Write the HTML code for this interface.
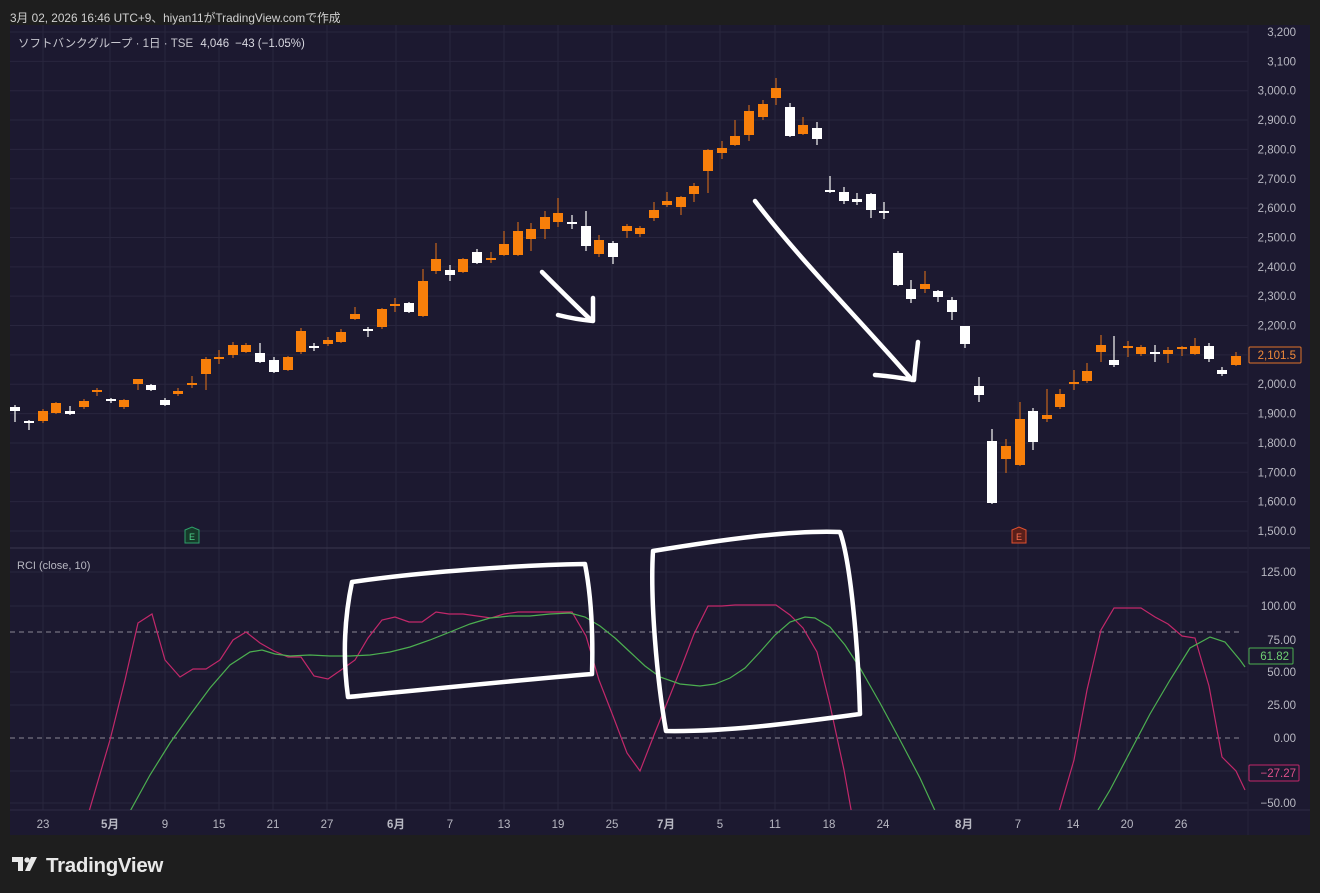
<!DOCTYPE html>
<html><head><meta charset="utf-8"><style>
html,body{margin:0;padding:0;background:#1e1e1e;width:1320px;height:893px;overflow:hidden;font-family:"Liberation Sans","Noto Sans CJK JP",sans-serif}
.top{position:absolute;left:10px;top:9px;font-size:11.8px;color:#d0d0d0}
svg{position:absolute;left:0;top:0}
</style></head><body>
<div class="top">3月 02, 2026 16:46 UTC+9、hiyan11がTradingView.comで作成</div>
<svg id="s" width="1320" height="893" xmlns="http://www.w3.org/2000/svg" font-family="Liberation Sans, Noto Sans CJK JP, sans-serif">
<rect x="10" y="25" width="1300" height="810" fill="#1c1930"/>
<g id="grid" stroke="#29263e" stroke-width="1"></g>
<line x1="10" y1="548" x2="1310" y2="548" stroke="#3a374e"/>
<line x1="10" y1="810" x2="1310" y2="810" stroke="#2e2b44"/>
<line x1="1248" y1="25" x2="1248" y2="835" stroke="#26233a"/>
<line x1="10" y1="632" x2="1240" y2="632" stroke="#8a8894" stroke-dasharray="5,4"/>
<line x1="10" y1="738" x2="1240" y2="738" stroke="#8a8894" stroke-dasharray="5,4"/>
<g id="candles"></g>
<clipPath id="rc"><rect x="10" y="550" width="1238" height="260"/></clipPath>
<g clip-path="url(#rc)" fill="none" stroke-width="1.2">
<polyline stroke="#c2286a" points="88,815 110,740 125,680 138,623 152,614 165,660 180,677 193,669 206,669 220,660 233,640 246,632 260,643 274,651 288,657 301,657 314,676 328,679 341,670 355,660 368,638 382,620 395,617 409,622 422,622 436,612 449,614 463,614 477,616 491,618 504,614 518,612 531,612 545,612 558,612 572,612 586,636 599,680 613,716 627,753 640,771 654,735 667,703 681,668 694,634 708,606 722,606 735,605 749,605 763,605 776,605 790,615 803,628 817,652 830,705 844,770 852,815"/>
<polyline stroke="#c2286a" points="1058,815 1074,760 1087,690 1101,630 1114,608 1128,608 1141,608 1155,617 1168,624 1182,636 1195,638 1209,686 1222,757 1236,771 1245,790"/>
<polyline stroke="#4caf50" points="128,815 150,775 170,743 190,715 210,688 230,665 250,652 262,650 275,654 290,656 310,655 330,656 350,656 370,655 390,652 410,647 430,640 450,632 470,624 490,618 510,616 530,616 550,614 570,613 585,617 600,626 615,638 630,652 645,666 660,677 680,684 700,686 715,684 730,678 745,668 760,652 775,635 790,622 805,617 815,618 830,627 845,645 860,668 880,703 900,740 920,778 937,815"/>
<polyline stroke="#4caf50" points="1095,815 1110,790 1130,752 1150,714 1170,680 1190,648 1210,637 1225,642 1240,660 1245,667"/>
</g>
<g fill="none" stroke="#fff" stroke-width="4.5" stroke-linecap="round" stroke-linejoin="round">
<path d="M542,272 C560,290 575,305 591,320 M558,315 C570,318 582,320 593,321 L593,298"/>
<path d="M755,201 C800,260 860,320 912,380 M875,375 C890,376 902,378 914,380 C915,365 917,352 918,342"/>
<path d="M352,582 C420,572 520,565 585,564 C592,600 593,640 592,674 C520,680 420,690 348,697 C343,660 344,620 352,582 Z"/>
<path d="M653,551 C720,540 790,530 840,532 C850,560 858,640 860,714 C800,722 730,732 666,731 C657,680 650,600 653,551 Z"/>
</g>
<g font-size="11.5" fill="#b8b8c2" text-anchor="end" id="py"></g>
<g font-size="11.5" fill="#b8b8c2" text-anchor="end">
<text x="1296" y="576">125.00</text><text x="1296" y="610">100.00</text><text x="1296" y="644">75.00</text><text x="1296" y="676">50.00</text><text x="1296" y="709">25.00</text><text x="1296" y="742">0.00</text><text x="1296" y="807">−50.00</text>
</g>
<rect x="1249" y="347" width="52" height="16" fill="#1c1930" stroke="#e0742a" rx="1"/>
<text x="1296" y="359" font-size="11.5" fill="#f08a3a" text-anchor="end">2,101.5</text>
<rect x="1249" y="648" width="44" height="16" fill="#1c1930" stroke="#4caf50" rx="1"/>
<text x="1289" y="660" font-size="11.5" fill="#6fcf73" text-anchor="end">61.82</text>
<rect x="1249" y="765" width="50" height="16" fill="#1c1930" stroke="#c2286a" rx="1"/>
<text x="1296" y="777" font-size="11.5" fill="#e0508a" text-anchor="end">−27.27</text>
<g font-size="11.5" fill="#b8b8c2" text-anchor="middle" id="tx">
<text x="43" y="828">23</text><text x="110" y="828" font-weight="bold">5月</text><text x="165" y="828">9</text><text x="219" y="828">15</text><text x="273" y="828">21</text><text x="327" y="828">27</text><text x="396" y="828" font-weight="bold">6月</text><text x="450" y="828">7</text><text x="504" y="828">13</text><text x="558" y="828">19</text><text x="612" y="828">25</text><text x="666" y="828" font-weight="bold">7月</text><text x="720" y="828">5</text><text x="775" y="828">11</text><text x="829" y="828">18</text><text x="883" y="828">24</text><text x="964" y="828" font-weight="bold">8月</text><text x="1018" y="828">7</text><text x="1073" y="828">14</text><text x="1127" y="828">20</text><text x="1181" y="828">26</text>
</g>
<text x="18" y="47" font-size="11.5" fill="#c8c8d0">ソフトバンクグループ · 1日 · TSE <tspan dx="4" fill="#d8d8e0">4,046</tspan><tspan dx="6" fill="#d8d8e0">−43 (−1.05%)</tspan></text>
<text x="17" y="569" font-size="11" fill="#b8b8c2">RCI (close, 10)</text>
<path d="M185,530 L192,527 L199,530 L199,543 L185,543 Z" fill="#163a2a" stroke="#2ea06a"/>
<text x="192" y="540" font-size="9" fill="#4fd08a" text-anchor="middle">E</text>
<path d="M1012,530 L1019,527 L1026,530 L1026,543 L1012,543 Z" fill="#5a1f1a" stroke="#e05030"/>
<text x="1019" y="540" font-size="9" fill="#ff7050" text-anchor="middle">E</text>
<g fill="#e8e8e8">
<path d="M12,857 h11 v14 h-5 v-9 h-6 z"/><circle cx="27" cy="860" r="2.6"/><path d="M31,857 h6 l-7,14 h-5 z"/>
</g>
<text x="46" y="872" font-size="20.5" font-weight="bold" fill="#e8e8e8" letter-spacing="-0.3">TradingView</text>
</svg>
<script>
var NS="http://www.w3.org/2000/svg";
function el(p,t,a){var e=document.createElementNS(NS,t);for(var k in a)e.setAttribute(k,a[k]);p.appendChild(e);return e;}
var g=document.getElementById('grid');
[43,110,165,219,273,327,396,450,504,558,612,666,720,775,829,883,964,1018,1073,1127,1181].forEach(function(x){el(g,'line',{x1:x,y1:25,x2:x,y2:810});});
var py=document.getElementById('py');
for(var i=0;i<18;i++){var v=3200-i*100;var y=32+i*(499/17);
el(g,'line',{x1:10,y1:y,x2:1248,y2:y});
var t=el(py,'text',{x:1296,y:y+4});t.textContent=v.toLocaleString('en-US')+'.0';
if(i==0||i==1)t.textContent=v.toLocaleString('en-US');}
[572,606,672,705,771,803].forEach(function(y){el(g,'line',{x1:10,y1:y,x2:1248,y2:y});});
var D=[[15,405,407,411,422,0],[29,420,422,422,430,0],[43,409,411,421,423,1],[56,402,403,413,414,1],[70,406,411,414,415,0],[84,399,401,407,409,1],[97,388,391,391,396,1],[111,398,400,400,403,0],[124,399,400,407,409,1],[138,379,379,384,390,1],[151,384,385,390,391,0],[165,398,400,405,406,0],[178,388,391,394,396,1],[192,376,384,384,388,1],[206,357,359,374,390,1],[219,350,358,358,364,1],[233,342,345,355,358,1],[246,343,345,352,353,1],[260,343,353,362,363,0],[274,357,360,372,373,0],[288,356,357,370,371,1],[301,328,331,352,354,1],[314,343,347,347,351,0],[328,337,340,344,346,1],[341,329,332,342,343,1],[355,307,314,319,320,1],[368,327,330,330,337,0],[382,308,309,327,329,1],[395,298,305,305,312,1],[409,302,303,312,313,0],[423,269,281,316,317,1],[436,243,259,271,274,1],[450,265,270,275,281,0],[463,258,259,272,273,1],[477,249,252,263,264,0],[491,252,259,259,263,1],[504,231,244,255,256,1],[518,222,231,255,256,1],[531,223,229,239,251,1],[545,211,217,229,239,1],[558,198,213,222,227,1],[572,215,223,223,229,0],[586,211,226,246,251,0],[599,235,240,254,257,1],[613,241,243,257,264,0],[627,224,226,231,238,1],[640,226,228,234,237,1],[654,202,210,218,221,1],[667,192,201,205,207,1],[681,196,197,207,215,1],[694,183,186,194,202,1],[708,149,150,171,193,1],[722,141,148,153,159,1],[735,120,136,145,146,1],[749,105,111,135,141,1],[763,100,104,117,120,1],[776,78,88,98,105,1],[790,103,107,136,137,0],[803,117,125,134,135,1],[817,122,128,139,145,0],[830,176,191,191,193,0],[844,187,192,201,204,0],[857,193,199,202,205,0],[871,193,194,210,218,0],[884,202,212,212,219,0],[898,251,253,285,286,0],[911,280,289,299,303,0],[925,271,284,289,293,1],[938,290,291,297,302,0],[952,297,300,312,320,0],[965,326,326,344,348,0],[979,377,386,395,402,0],[992,429,441,503,504,0],[1006,439,446,459,473,1],[1020,402,419,465,466,1],[1033,408,411,442,450,0],[1047,389,415,419,422,1],[1060,389,394,407,409,1],[1074,370,383,383,390,1],[1087,363,371,381,383,1],[1101,335,345,352,362,1],[1114,336,360,365,367,0],[1128,341,347,347,357,1],[1141,345,347,354,356,1],[1155,345,353,353,362,0],[1168,347,350,354,363,1],[1182,346,348,348,356,1],[1195,338,346,354,355,1],[1209,343,346,359,362,0],[1222,367,370,374,376,0],[1236,352,356,365,366,1]];
var c=document.getElementById('candles');
D.forEach(function(d){var col=d[5]?'#f77f0a':'#ffffff',wc=d[5]?'#b8601e':'#e8e8e8';
el(c,'line',{x1:d[0],y1:d[1],x2:d[0],y2:d[4],stroke:wc,'stroke-width':1.3});
var h=d[3]-d[2];if(h<2)h=2;el(c,'rect',{x:d[0]-5,y:d[2]-(d[3]==d[2]?1:0),width:10,height:h,fill:col});});
</script>
</body></html>
